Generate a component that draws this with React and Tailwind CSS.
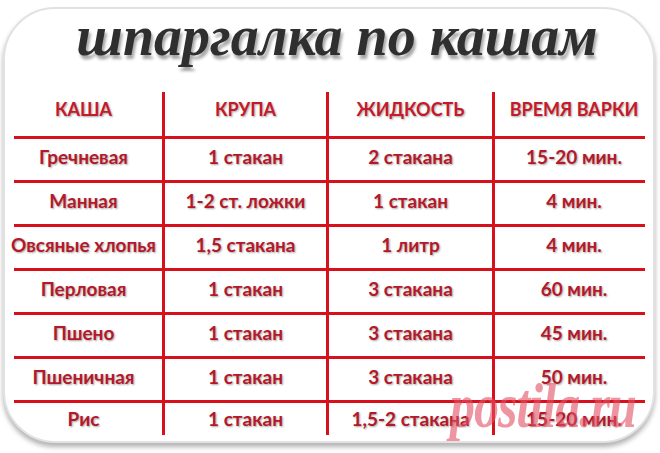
import React from "react";

const rows = [
  ["Гречневая", "1 стакан", "2 стакана", "15-20 мин."],
  ["Манная", "1-2 ст. ложки", "1 стакан", "4 мин."],
  ["Овсяные хлопья", "1,5 стакана", "1 литр", "4 мин."],
  ["Перловая", "1 стакан", "3 стакана", "60 мин."],
  ["Пшено", "1 стакан", "3 стакана", "45 мин."],
  ["Пшеничная", "1 стакан", "3 стакана", "50 мин."],
  ["Рис", "1 стакан", "1,5-2 стакана", "15-20 мин."],
];

const head = ["КАША", "КРУПА", "ЖИДКОСТЬ", "ВРЕМЯ ВАРКИ"];

const cols = "grid grid-cols-[157px_164px_166px_161px]";
const cell = "flex items-center justify-center whitespace-nowrap overflow-visible";

function Row({ cells, header, last }) {
  const h = header ? "h-[44px] pb-[10px]" : last ? "h-[32px]" : "h-[41px] pb-[5px]";
  const txt = header
    ? "text-[#c41a2c] text-[18px]"
    : "text-[#b3192b] text-[19px]";
  return (
    <div className={cols}>
      {cells.map((c, i) => (
        <div
          key={i}
          className={`${cell} ${h} ${txt} ${i > 0 ? "border-l-[3px] border-[#d8101c]" : ""}`}
        >
          <span className="[text-shadow:1px_1px_2px_rgba(0,0,0,0.35)]">{c}</span>
        </div>
      ))}
    </div>
  );
}

function Line() {
  return <div className="ml-[9px] w-[631px] h-[3px] bg-[#d8101c]" />;
}

export default function App() {
  return (
    <div className="relative w-[660px] h-[453px] bg-white overflow-hidden pl-[3px] pt-[7px] font-['Lato','Liberation_Sans',sans-serif] font-bold">
      {/* card */}
      <div className="w-[652px] h-[436px] rounded-[52px] border-2 border-[#e2e2e2] bg-white shadow-[0_4px_5px_rgba(0,0,0,0.3)]">
        <h1 className="h-[83px] pl-[16px] text-center text-[56px] leading-[54px] italic font-bold text-[#2f2f2f] font-['Liberation_Serif',serif] [text-shadow:2px_4px_3px_rgba(0,0,0,0.35)]">
          шпаргалка по кашам
        </h1>

        <Row cells={head} header />
        {rows.map((r, i) => (
          <React.Fragment key={i}>
            <Line />
            <Row cells={r} last={i === rows.length - 1} />
          </React.Fragment>
        ))}
      </div>

      {/* watermark */}
      <div className="absolute left-[450px] top-[387px] origin-bottom scale-y-[1.25] text-[50px] leading-[50px] italic font-bold text-[rgba(226,78,100,0.6)] font-['Liberation_Serif',serif] tracking-[-1px]">
        postila.ru
      </div>
    </div>
  );
}
